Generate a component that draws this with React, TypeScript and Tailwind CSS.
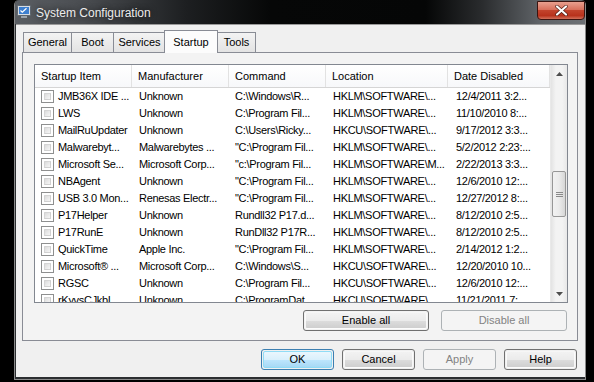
import React from "react"

const rows: string[][] = [
  ["JMB36X IDE ...", "Unknown", "C:\\Windows\\R...", "HKLM\\SOFTWARE\\...", "12/4/2011 3:2..."],
  ["LWS", "Unknown", "C:\\Program Fil...", "HKLM\\SOFTWARE\\...", "11/10/2010 8:..."],
  ["MailRuUpdater", "Unknown", "C:\\Users\\Ricky...", "HKCU\\SOFTWARE\\...", "9/17/2012 3:3..."],
  ["Malwarebyt...", "Malwarebytes ...", "\"C:\\Program Fil...", "HKLM\\SOFTWARE\\...", "5/2/2012 2:23:..."],
  ["Microsoft Se...", "Microsoft Corp...", "\"c:\\Program Fil...", "HKLM\\SOFTWARE\\M...", "2/22/2013 3:3..."],
  ["NBAgent", "Unknown", "\"C:\\Program Fil...", "HKLM\\SOFTWARE\\...", "12/6/2010 12:..."],
  ["USB 3.0 Mon...", "Renesas Electr...", "\"C:\\Program Fil...", "HKLM\\SOFTWARE\\...", "12/27/2012 8:..."],
  ["P17Helper", "Unknown", "Rundll32 P17.d...", "HKLM\\SOFTWARE\\...", "8/12/2010 2:5..."],
  ["P17RunE", "Unknown", "RunDll32 P17R...", "HKLM\\SOFTWARE\\...", "8/12/2010 2:5..."],
  ["QuickTime", "Apple Inc.", "\"C:\\Program Fil...", "HKLM\\SOFTWARE\\...", "2/14/2012 1:2..."],
  ["Microsoft\u00ae ...", "Microsoft Corp...", "C:\\Windows\\S...", "HKCU\\SOFTWARE\\...", "12/20/2010 10..."],
  ["RGSC", "Unknown", "C:\\Program Fil...", "HKCU\\SOFTWARE\\...", "12/6/2010 12:..."],
  ["rKyvsCJkbI", "Unknown", "C:\\ProgramDat...", "HKCU\\SOFTWARE\\...", "11/21/2011 7:..."],
]

const cols = [
  { label: "Startup Item", w: "w-[97px]" },
  { label: "Manufacturer", w: "w-[97px]" },
  { label: "Command", w: "w-[97px]" },
  { label: "Location", w: "w-[122px]" },
  { label: "Date Disabled", w: "w-[102px]" },
]

function Checkbox() {
  return (
    <div className="w-[13px] h-[13px] shrink-0 border border-[#8e8f8f] bg-white p-[2px]">
      <div className="w-full h-full bg-[linear-gradient(135deg,#dcdcdc,#f6f6f6)] border border-[#c4c4c4]/60" />
    </div>
  )
}

function WinButton({ label, disabled, primary, w }: { label: string; disabled?: boolean; primary?: boolean; w: string }) {
  if (disabled) {
    return (
      <div className={`${w} h-[21px] rounded-[3px] border border-[#adb2b5] bg-[#f4f4f4] flex items-center justify-center text-[#838383]`}>
        {label}
      </div>
    )
  }
  return (
    <div
      className={`${w} h-[21px] rounded-[3px] border ${primary ? "border-[#3c7fb1]" : "border-[#707070]"} p-px`}
    >
      <div
        className={`w-full h-full rounded-[2px] flex items-center justify-center text-black ${
          primary
            ? "border border-[#8fdcf6] bg-[linear-gradient(#eaf6fd_0%,#d9f0fc_50%,#bee6fd_51%,#a7d9f5_100%)]"
            : "border border-white/80 bg-[linear-gradient(#f2f2f2_0%,#ebebeb_50%,#dddddd_51%,#cfcfcf_100%)]"
        }`}
      >
        {label}
      </div>
    </div>
  )
}

function Tab({ label, w, selected }: { label: string; w: string; selected?: boolean }) {
  if (selected) {
    return (
      <div className={`${w} h-[23px] -mb-px relative z-10 border border-b-0 border-[#898c95] bg-[#fcfcfc] flex items-start justify-center pt-[3px] -mx-px`}>
        {label}
      </div>
    )
  }
  return (
    <div className={`${w} h-[20px] border border-b-0 border-[#898c95] bg-[linear-gradient(#f3f3f3,#e3e3e3)] flex items-center justify-center -mr-px`}>
      {label}
    </div>
  )
}

export default function App() {
  return (
    <div
      className="w-[594px] h-[382px] bg-black flex pl-[14px] overflow-hidden text-[11px] text-black"
      style={{ fontFamily: '"Liberation Sans", Arial, sans-serif' }}
    >
      <div className="w-[572px] h-[380px] flex flex-col border-l border-r border-b border-[#8a8a8a] bg-[#2b2e31] rounded-t-[5px]">
        {/* title bar */}
        <div className="h-[24px] shrink-0 flex items-start rounded-t-[5px] bg-[linear-gradient(90deg,#5a5e63_0%,#4a4d51_12%,#1d1f21_30%,#060707_45%,#050606_72%,#2a2c2e_82%,#5f6367_92%,#6c7074_100%)]">
          <div className="pl-[2px] pt-[5px]">
            <svg width="14" height="14" viewBox="0 0 14 14">
              <rect x="0.5" y="0.5" width="13" height="10" rx="1" fill="#d8dde4" stroke="#5d6670" />
              <rect x="2" y="2" width="10" height="7" fill="#3d7fd0" />
              <path d="M3.5 5.5 L5.3 7.2 L9.5 3.2" stroke="#fff" strokeWidth="1.2" fill="none" />
              <rect x="4" y="11" width="6" height="2" fill="#9aa3ad" />
            </svg>
          </div>
          <div className="pl-[5px] pt-[5px] text-[12px] leading-[16px] text-[#ececec] [text-shadow:0_0_6px_rgba(0,0,0,0.8)]">
            System Configuration
          </div>
          <div className="ml-auto mt-[1px] w-[48px] h-[19px] rounded-b-[4px] border border-[#3b1410] bg-[linear-gradient(#e8a08f_0%,#d8705c_45%,#c2432c_50%,#b8321c_80%,#d2705a_100%)] flex items-center justify-center">
            <svg width="13" height="11" viewBox="0 0 13 11">
              <path d="M2 1.5 L11 9.5 M11 1.5 L2 9.5" stroke="#4a1a12" strokeWidth="3.4" strokeLinecap="round" />
              <path d="M2 1.5 L11 9.5 M11 1.5 L2 9.5" stroke="#ffffff" strokeWidth="2.2" strokeLinecap="round" />
            </svg>
          </div>
        </div>

        {/* client area */}
        <div className="flex-1 ml-px mr-0 mb-[2px] bg-[#f0f0f0] border-t border-[#9a9a9a] flex flex-col pt-[5px] pl-[6px] pr-[7px]">
          {/* tabs */}
          <div className="h-[22px] flex items-end pl-[1px]">
            <Tab label="General" w="w-[49px]" />
            <Tab label="Boot" w="w-[43px]" />
            <Tab label="Services" w="w-[53px]" />
            <Tab label="Startup" w="w-[54px]" selected />
            <Tab label="Tools" w="w-[39px]" />
          </div>

          {/* tab panel */}
          <div className="h-[289px] w-[556px] border border-[#898c95] bg-[#f3f3f3] flex flex-col pt-[11px] pl-[11px]">
            {/* list view */}
            <div className="w-[534px] h-[239px] border border-[#828790] bg-white flex overflow-hidden">
              <div className="flex-1 flex flex-col overflow-hidden">
                <div className="h-[23px] shrink-0 flex border-b border-[#d5d5d5] bg-[linear-gradient(#ffffff,#f7f8fa)]">
                  {cols.map((c) => (
                    <div
                      key={c.label}
                      className={`${c.w} shrink-0 h-full border-r border-[#e2e2e2] flex items-center pl-[6px] whitespace-nowrap`}
                    >
                      {c.label}
                    </div>
                  ))}
                </div>
                <div className="flex-1 overflow-hidden tracking-[-0.3px]">
                  {rows.map((r, i) => (
                    <div key={i} className="h-[17px] flex items-center whitespace-nowrap">
                      <div className="w-[97px] shrink-0 flex items-center gap-[4px] pl-[6px] overflow-hidden">
                        <Checkbox />
                        <span>{r[0]}</span>
                      </div>
                      <div className="w-[97px] shrink-0 pl-[7px] overflow-hidden">{r[1]}</div>
                      <div className="w-[97px] shrink-0 pl-[6px] overflow-hidden">{r[2]}</div>
                      <div className="w-[122px] shrink-0 pl-[7px] overflow-hidden">{r[3]}</div>
                      <div className="w-[102px] shrink-0 pl-[8px] overflow-hidden">{r[4]}</div>
                    </div>
                  ))}
                </div>
              </div>

              {/* scrollbar */}
              <div className="w-[17px] shrink-0 h-full flex flex-col bg-[linear-gradient(90deg,#e3e3e3,#f3f3f3_30%,#f3f3f3_70%,#e8e8e8)] border-l border-[#e9e9e9]">
                <div className="h-[17px] flex items-center justify-center">
                  <svg width="7" height="4" viewBox="0 0 7 4">
                    <path d="M0 4 L3.5 0 L7 4 Z" fill="#4d4d4d" />
                  </svg>
                </div>
                <div className="h-[89px]" />
                <div className="h-[46px] mx-[1px] rounded-[2px] border border-[#979797] bg-[linear-gradient(90deg,#f2f2f2,#ebebeb_50%,#d6d6d6)] flex items-center justify-center">
                  <svg width="7" height="7" viewBox="0 0 7 7">
                    <path d="M0 1.5 H7 M0 3.5 H7 M0 5.5 H7" stroke="#8a8a8a" strokeWidth="1" />
                  </svg>
                </div>
                <div className="flex-1" />
                <div className="h-[17px] flex items-center justify-center">
                  <svg width="7" height="4" viewBox="0 0 7 4">
                    <path d="M0 0 L3.5 4 L7 0 Z" fill="#4d4d4d" />
                  </svg>
                </div>
              </div>
            </div>

            <div className="mt-[7px] flex justify-end gap-[12px] pr-[10px]">
              <WinButton label="Enable all" w="w-[126px]" />
              <WinButton label="Disable all" w="w-[126px]" disabled />
            </div>
          </div>

          {/* dialog buttons */}
          <div className="mt-[8px] flex justify-end gap-[8px] pr-[1px]">
            <WinButton label="OK" w="w-[73px]" primary />
            <WinButton label="Cancel" w="w-[73px]" />
            <WinButton label="Apply" w="w-[73px]" disabled />
            <WinButton label="Help" w="w-[73px]" />
          </div>
        </div>
      </div>
    </div>
  )
}
